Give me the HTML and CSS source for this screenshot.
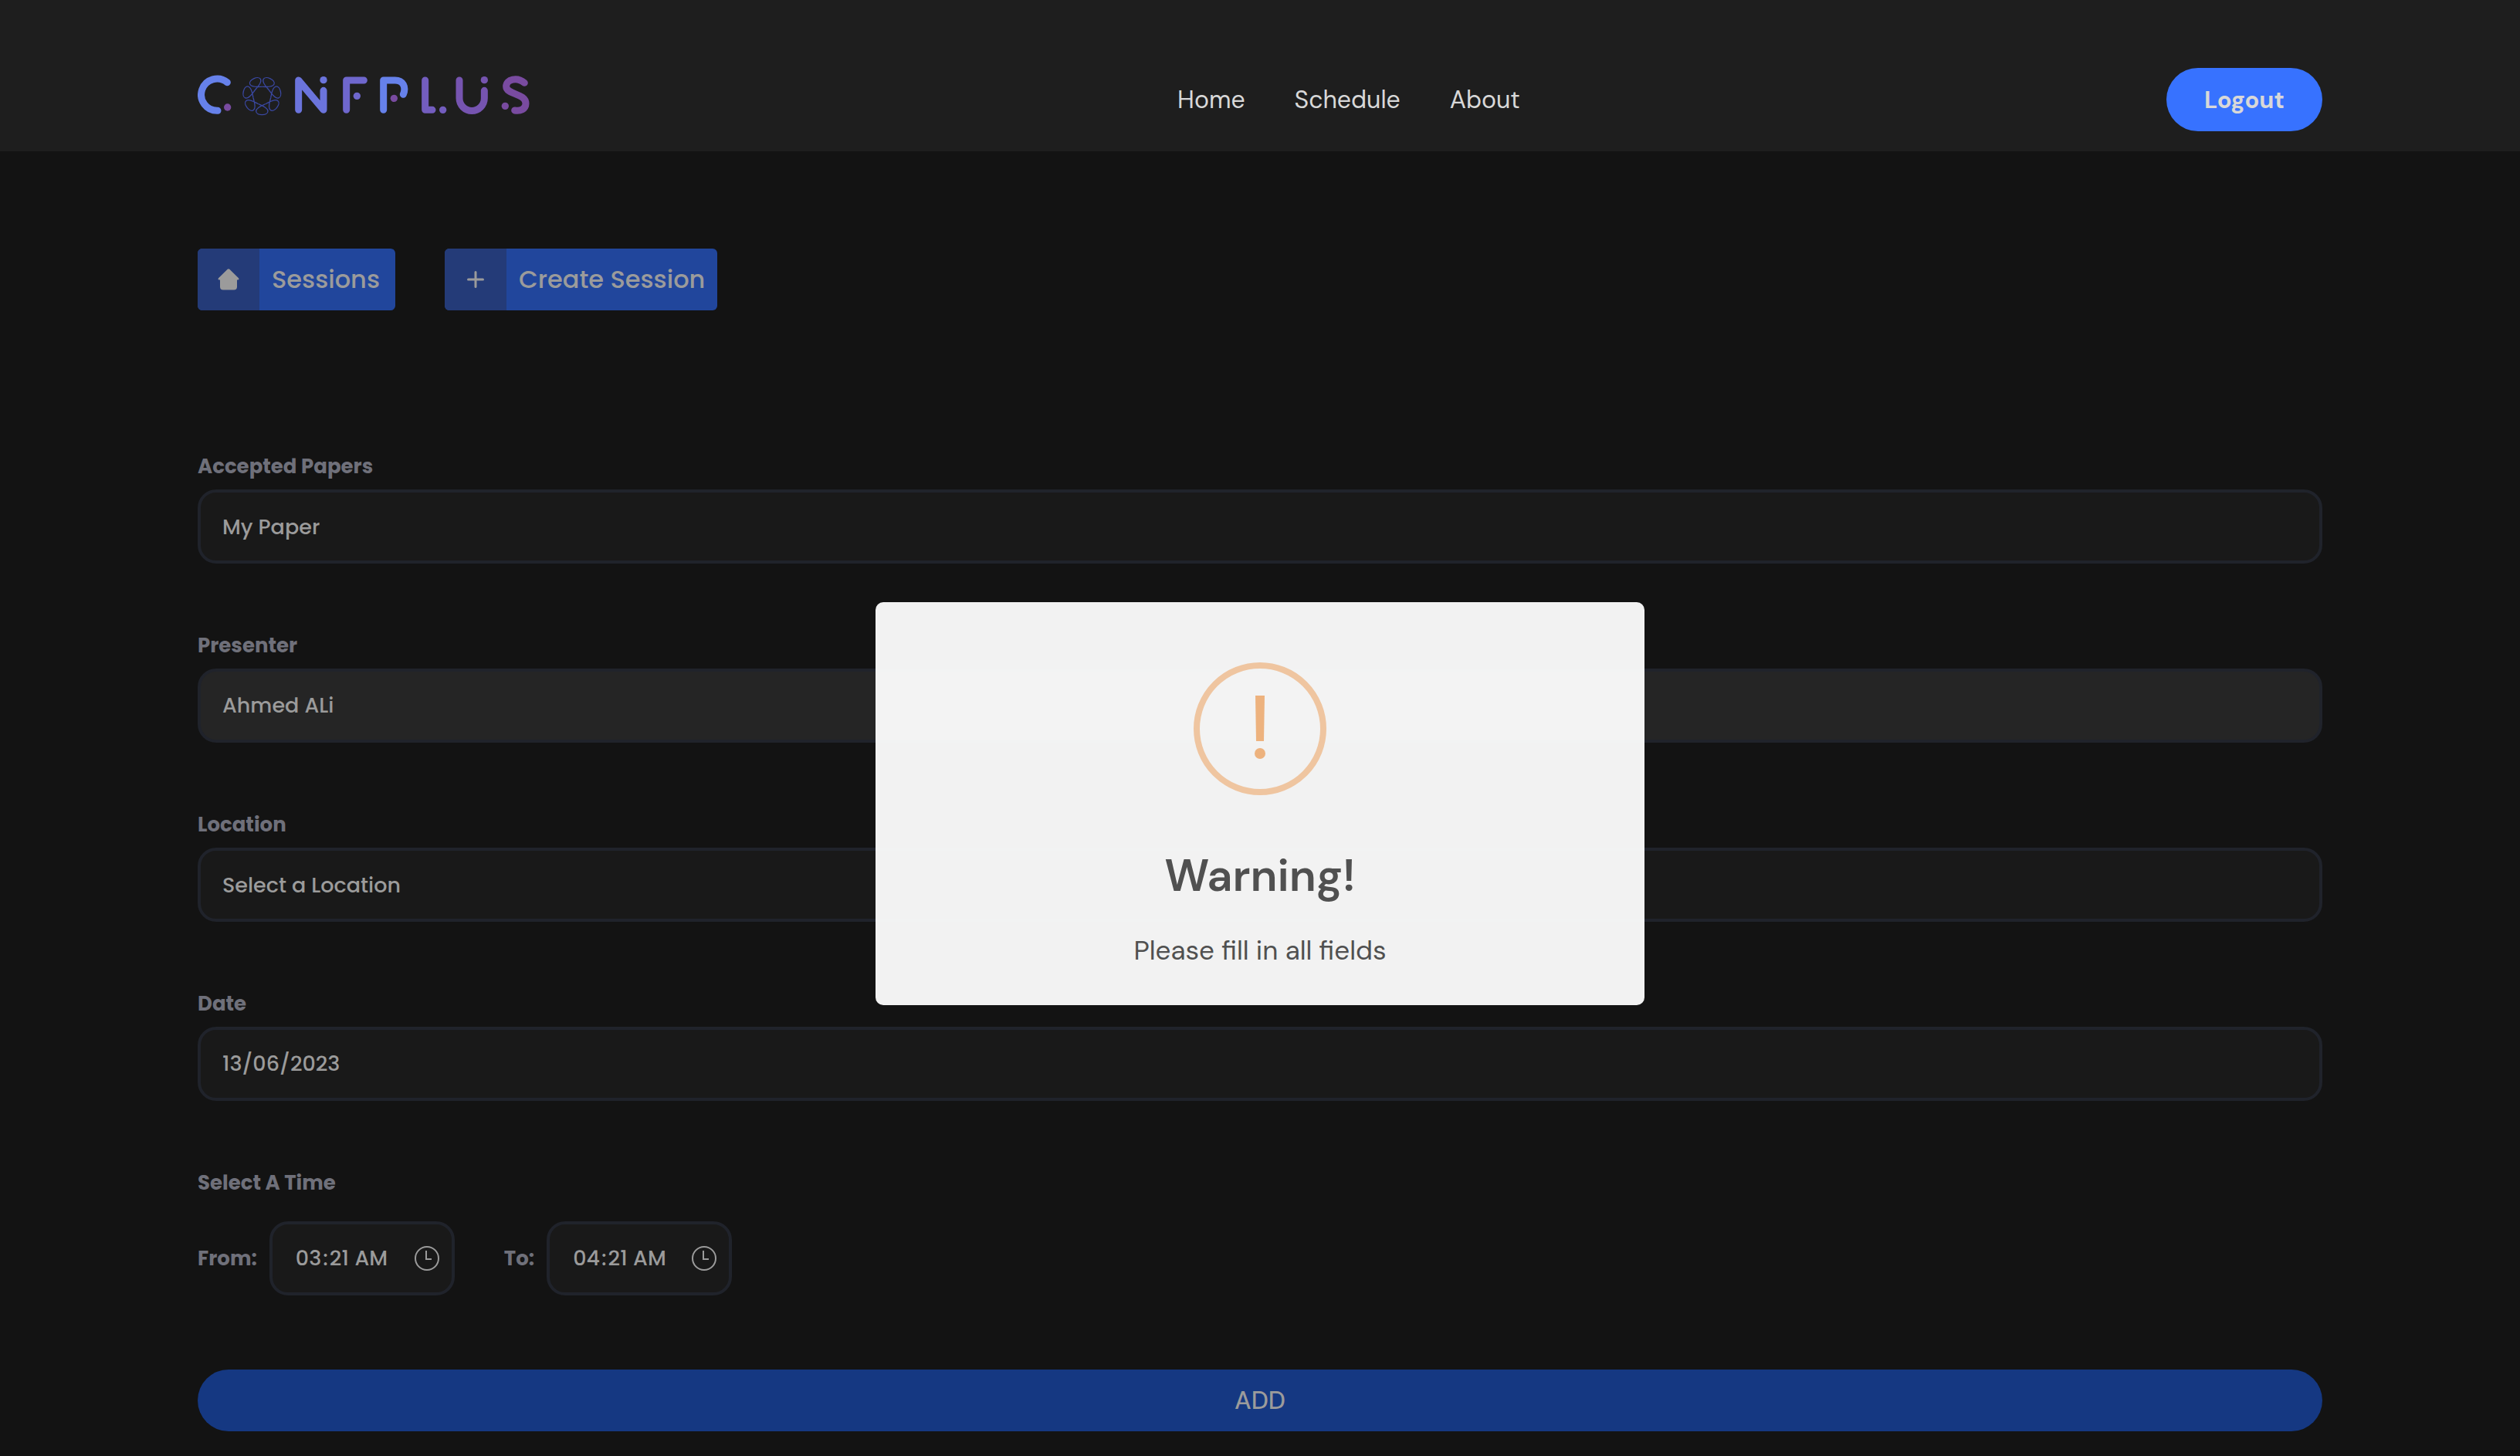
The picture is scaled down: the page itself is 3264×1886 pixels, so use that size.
FILE: index.html
```html
<!DOCTYPE html>
<html lang="en">
<head>
<meta charset="utf-8">
<title>ConfPlus</title>
<link rel="stylesheet" href="styles.css">
</head>
<body>
<header class="site-header">
  <a class="logo" href="#" aria-label="ConfPlus">
    <svg class="logo-mark" viewBox="48 48 1296 162" aria-hidden="true">
      <defs>
        <path id="petal" d="M-15.2 31.5C-6 36 23 45 23 60C23 70 10 74 0 74C-10 74-23 70-23 60C-23 45 6 36 15.2 31.5"/>
      </defs>
      <g fill="none" stroke-width="27" stroke-linecap="round" stroke-linejoin="round">
        <path stroke="#6681ea" d="M163 80A62 62 0 1 0 126 190"/>
        <path stroke="#6b74dc" d="M440 187V72L537 187V112"/>
        <path stroke="#6f67cd" d="M626 187V72H694"/>
        <path stroke="#6681ea" d="M770 187V72H815C846 72 859 98 847 127"/>
        <path stroke="#735dbe" d="M932 72V187H960"/>
        <path stroke="#7654b0" d="M1065 72V142A48 48 0 0 0 1162 142V112"/>
        <path stroke="#794ba0" d="M1318 82C1290 58 1247 67 1247 96C1247 128 1323 122 1323 162C1323 184 1302 193 1280 189"/>
      </g>
      <circle cx="164" cy="177" r="14" fill="#794ba0"/>
      <circle cx="537" cy="71" r="14" fill="#6b74dc"/>
      <circle cx="667" cy="133" r="14" fill="#6f67cd"/>
      <circle cx="811" cy="142" r="14" fill="#794ba0"/>
      <circle cx="1001" cy="187" r="14" fill="#735dbe"/>
      <circle cx="1162" cy="71" r="14" fill="#7654b0"/>
      <circle cx="1243" cy="172" r="14" fill="#794ba0"/>
      <g transform="translate(298 132)" fill="none" stroke="#3a48a2" stroke-width="4">
        <use href="#petal"/>
        <use href="#petal" transform="rotate(51.43)"/>
        <use href="#petal" transform="rotate(102.86)"/>
        <use href="#petal" transform="rotate(154.29)"/>
        <use href="#petal" transform="rotate(205.71)"/>
        <use href="#petal" transform="rotate(257.14)"/>
        <use href="#petal" transform="rotate(308.57)"/>
      </g>
    </svg>
  </a>
  <nav class="site-nav">
    <a href="#">Home</a>
    <a href="#">Schedule</a>
    <a href="#">About</a>
  </nav>
  <button class="logout" type="button">Logout</button>
</header>
<main class="page">
  <div class="toolbar">
    <button class="tool" type="button">
      <span class="tool-icon"><svg viewBox="0 0 28 28" aria-hidden="true"><path fill="currentColor" d="M12.700.8Q14-.4 15.300.8L27 12.300Q28.300 14.200 26 14.400H25V23.500Q25 27.500 21 27.500H7Q3 27.500 3 23.500V14.400H2Q-.3 14.200 1 12.300Z"/></svg></span>
      <span class="tool-text">Sessions</span>
    </button>
    <button class="tool" type="button">
      <span class="tool-icon"><svg viewBox="0 0 28 28" aria-hidden="true"><path stroke="currentColor" stroke-width="3" stroke-linecap="round" d="M14 4.500V23.500M4.500 14H23.500"/></svg></span>
      <span class="tool-text">Create Session</span>
    </button>
  </div>
  <form class="form">
    <div class="field">
      <label for="paper">Accepted Papers</label>
      <select class="control" id="paper"><option>My Paper</option></select>
    </div>
    <div class="field">
      <label for="presenter">Presenter</label>
      <input class="control presenter" id="presenter" type="text" value="Ahmed ALi" readonly>
    </div>
    <div class="field">
      <label for="location">Location</label>
      <select class="control" id="location"><option>Select a Location</option></select>
    </div>
    <div class="field">
      <label for="date">Date</label>
      <input class="control" id="date" type="text" value="13/06/2023">
    </div>
    <fieldset class="times">
      <legend>Select A Time</legend>
      <div class="time-row">
        <div class="time">
          <label for="from">From:</label>
          <span class="control time-box">
            <input id="from" type="time" value="03:21">
            <svg viewBox="0 0 32 32" aria-hidden="true"><g fill="none" stroke="currentColor" stroke-width="2"><circle cx="16" cy="16" r="15"/><path d="M15 6V17H22"/></g></svg>
          </span>
        </div>
        <div class="time">
          <label for="to">To:</label>
          <span class="control time-box">
            <input id="to" type="time" value="04:21">
            <svg viewBox="0 0 32 32" aria-hidden="true"><g fill="none" stroke="currentColor" stroke-width="2"><circle cx="16" cy="16" r="15"/><path d="M15 6V17H22"/></g></svg>
          </span>
        </div>
      </div>
    </fieldset>
    <button class="add" type="button">ADD</button>
  </form>
  <div class="overlay">
    <div class="alert" role="alertdialog" aria-labelledby="alert-title" aria-describedby="alert-text">
      <svg class="alert-icon" viewBox="0 0 172 172" aria-hidden="true">
        <circle cx="86" cy="86" r="82" fill="none" stroke="#efc5a0" stroke-width="8"/>
        <path fill="#edb27e" d="M80 43H92L91 102H81Z"/>
        <circle cx="86" cy="118" r="7" fill="#edb27e"/>
      </svg>
      <h2 class="alert-title" id="alert-title">Warning!</h2>
      <p class="alert-text" id="alert-text">Please fill in all fields</p>
    </div>
  </div>
</main>
</body>
</html>
```
FILE: styles.css
```css
* {
  box-sizing: border-box;
}

body {
  margin: 0;
  min-height: 100vh;
  display: flex;
  flex-direction: column;
  background: #131313;
  color: #9b9b9b;
  font-family: Poppins, Inter, sans-serif;
  font-size: 27px;
  font-weight: 500;
}

button,
input,
select {
  font: inherit;
  color: inherit;
  border: 0;
  margin: 0;
  padding: 0;
}

.site-header {
  display: grid;
  grid-template-columns: 1fr auto 1fr;
  align-items: center;
  padding: 62px 256px 0;
  height: 196px;
  background: #1e1e1e;
  font-family: "DM Sans", Inter, sans-serif;
}

.logo {
  align-self: start;
  margin-top: 34px;
}

.logo-mark {
  display: block;
  width: 432px;
  height: 54px;
}

.site-nav {
  display: flex;
  gap: 64px;
  margin-left: 230px;
  font-size: 32px;
  font-weight: 400;
}

.site-nav a {
  color: #d8d8d8;
  text-decoration: none;
}

.logout {
  justify-self: end;
  width: 202px;
  height: 82px;
  border-radius: 41px;
  background: #3772ff;
  color: #d8d8d8;
  font-family: "DM Sans", "Open Sans", sans-serif;
  font-size: 31px;
  font-weight: 700;
}

.page {
  position: relative;
  flex: 1;
  padding: 126px 256px 32px;
}

.toolbar {
  display: flex;
  gap: 64px;
  margin-bottom: 186px;
}

.tool {
  display: flex;
  align-items: center;
  min-width: 256px;
  height: 80px;
  border-radius: 6px;
  overflow: hidden;
  background: #21469c;
  font-size: 32px;
}

.tool-icon {
  display: grid;
  place-items: center;
  width: 80px;
  height: 80px;
  background: #243b78;
}

.tool-icon svg {
  width: 28px;
  height: 28px;
}

.tool-text {
  padding: 0 16px;
}

.form {
  display: flex;
  flex-direction: column;
  gap: 90px;
}

.field {
  display: flex;
  flex-direction: column;
  gap: 14px;
}

label,
legend {
  padding: 0;
  color: #6f707a;
  font-size: 26px;
  font-weight: 700;
  line-height: 32px;
}

.control {
  appearance: none;
  width: 100%;
  height: 96px;
  padding: 0 28px;
  border: 4px solid #20232b;
  border-radius: 24px;
  background: #191919;
}

.presenter {
  background: #252525;
}

.times {
  min-width: 0;
  margin: 0;
  padding: 0;
  border: 0;
}

.time-row {
  display: flex;
  gap: 64px;
  padding-top: 34px;
}

.time {
  display: flex;
  align-items: center;
  gap: 16px;
}

.time-box {
  display: flex;
  align-items: center;
  justify-content: space-between;
  width: 240px;
  padding: 0 16px 0 28px;
}

.time-box input {
  width: 140px;
  background: transparent;
}

.time-box input::-webkit-calendar-picker-indicator {
  display: none;
}

.time-box input::-webkit-datetime-edit-hour-field,
.time-box input::-webkit-datetime-edit-minute-field {
  padding: 0 2px;
}

.time-box input::-webkit-datetime-edit-ampm-field {
  padding: 0 2px;
}

.time-box svg {
  flex: none;
  width: 32px;
  height: 32px;
}

.add {
  height: 80px;
  margin-top: 6px;
  border-radius: 40px;
  background: #153882;
  font-family: "DM Sans", Inter, sans-serif;
  font-size: 32px;
}

.overlay {
  position: absolute;
  inset: 0;
  display: grid;
  place-items: center;
}

.alert {
  display: flex;
  flex-direction: column;
  align-items: center;
  width: 996px;
  padding: 78px 32px 42px;
  border-radius: 10px;
  background: rgba(255, 255, 255, 0.945);
  color: #505050;
  font-family: "DM Sans", Inter, sans-serif;
  text-align: center;
}

.alert-icon {
  width: 172px;
  height: 172px;
}

.alert-title {
  margin: 64px 0 0;
  font-family: "DM Sans", "Open Sans", sans-serif;
  font-size: 58px;
  font-weight: 600;
  line-height: 80px;
}

.alert-text {
  margin: 28px 0 0;
  font-size: 35px;
  font-weight: 400;
  line-height: 58px;
}
```
